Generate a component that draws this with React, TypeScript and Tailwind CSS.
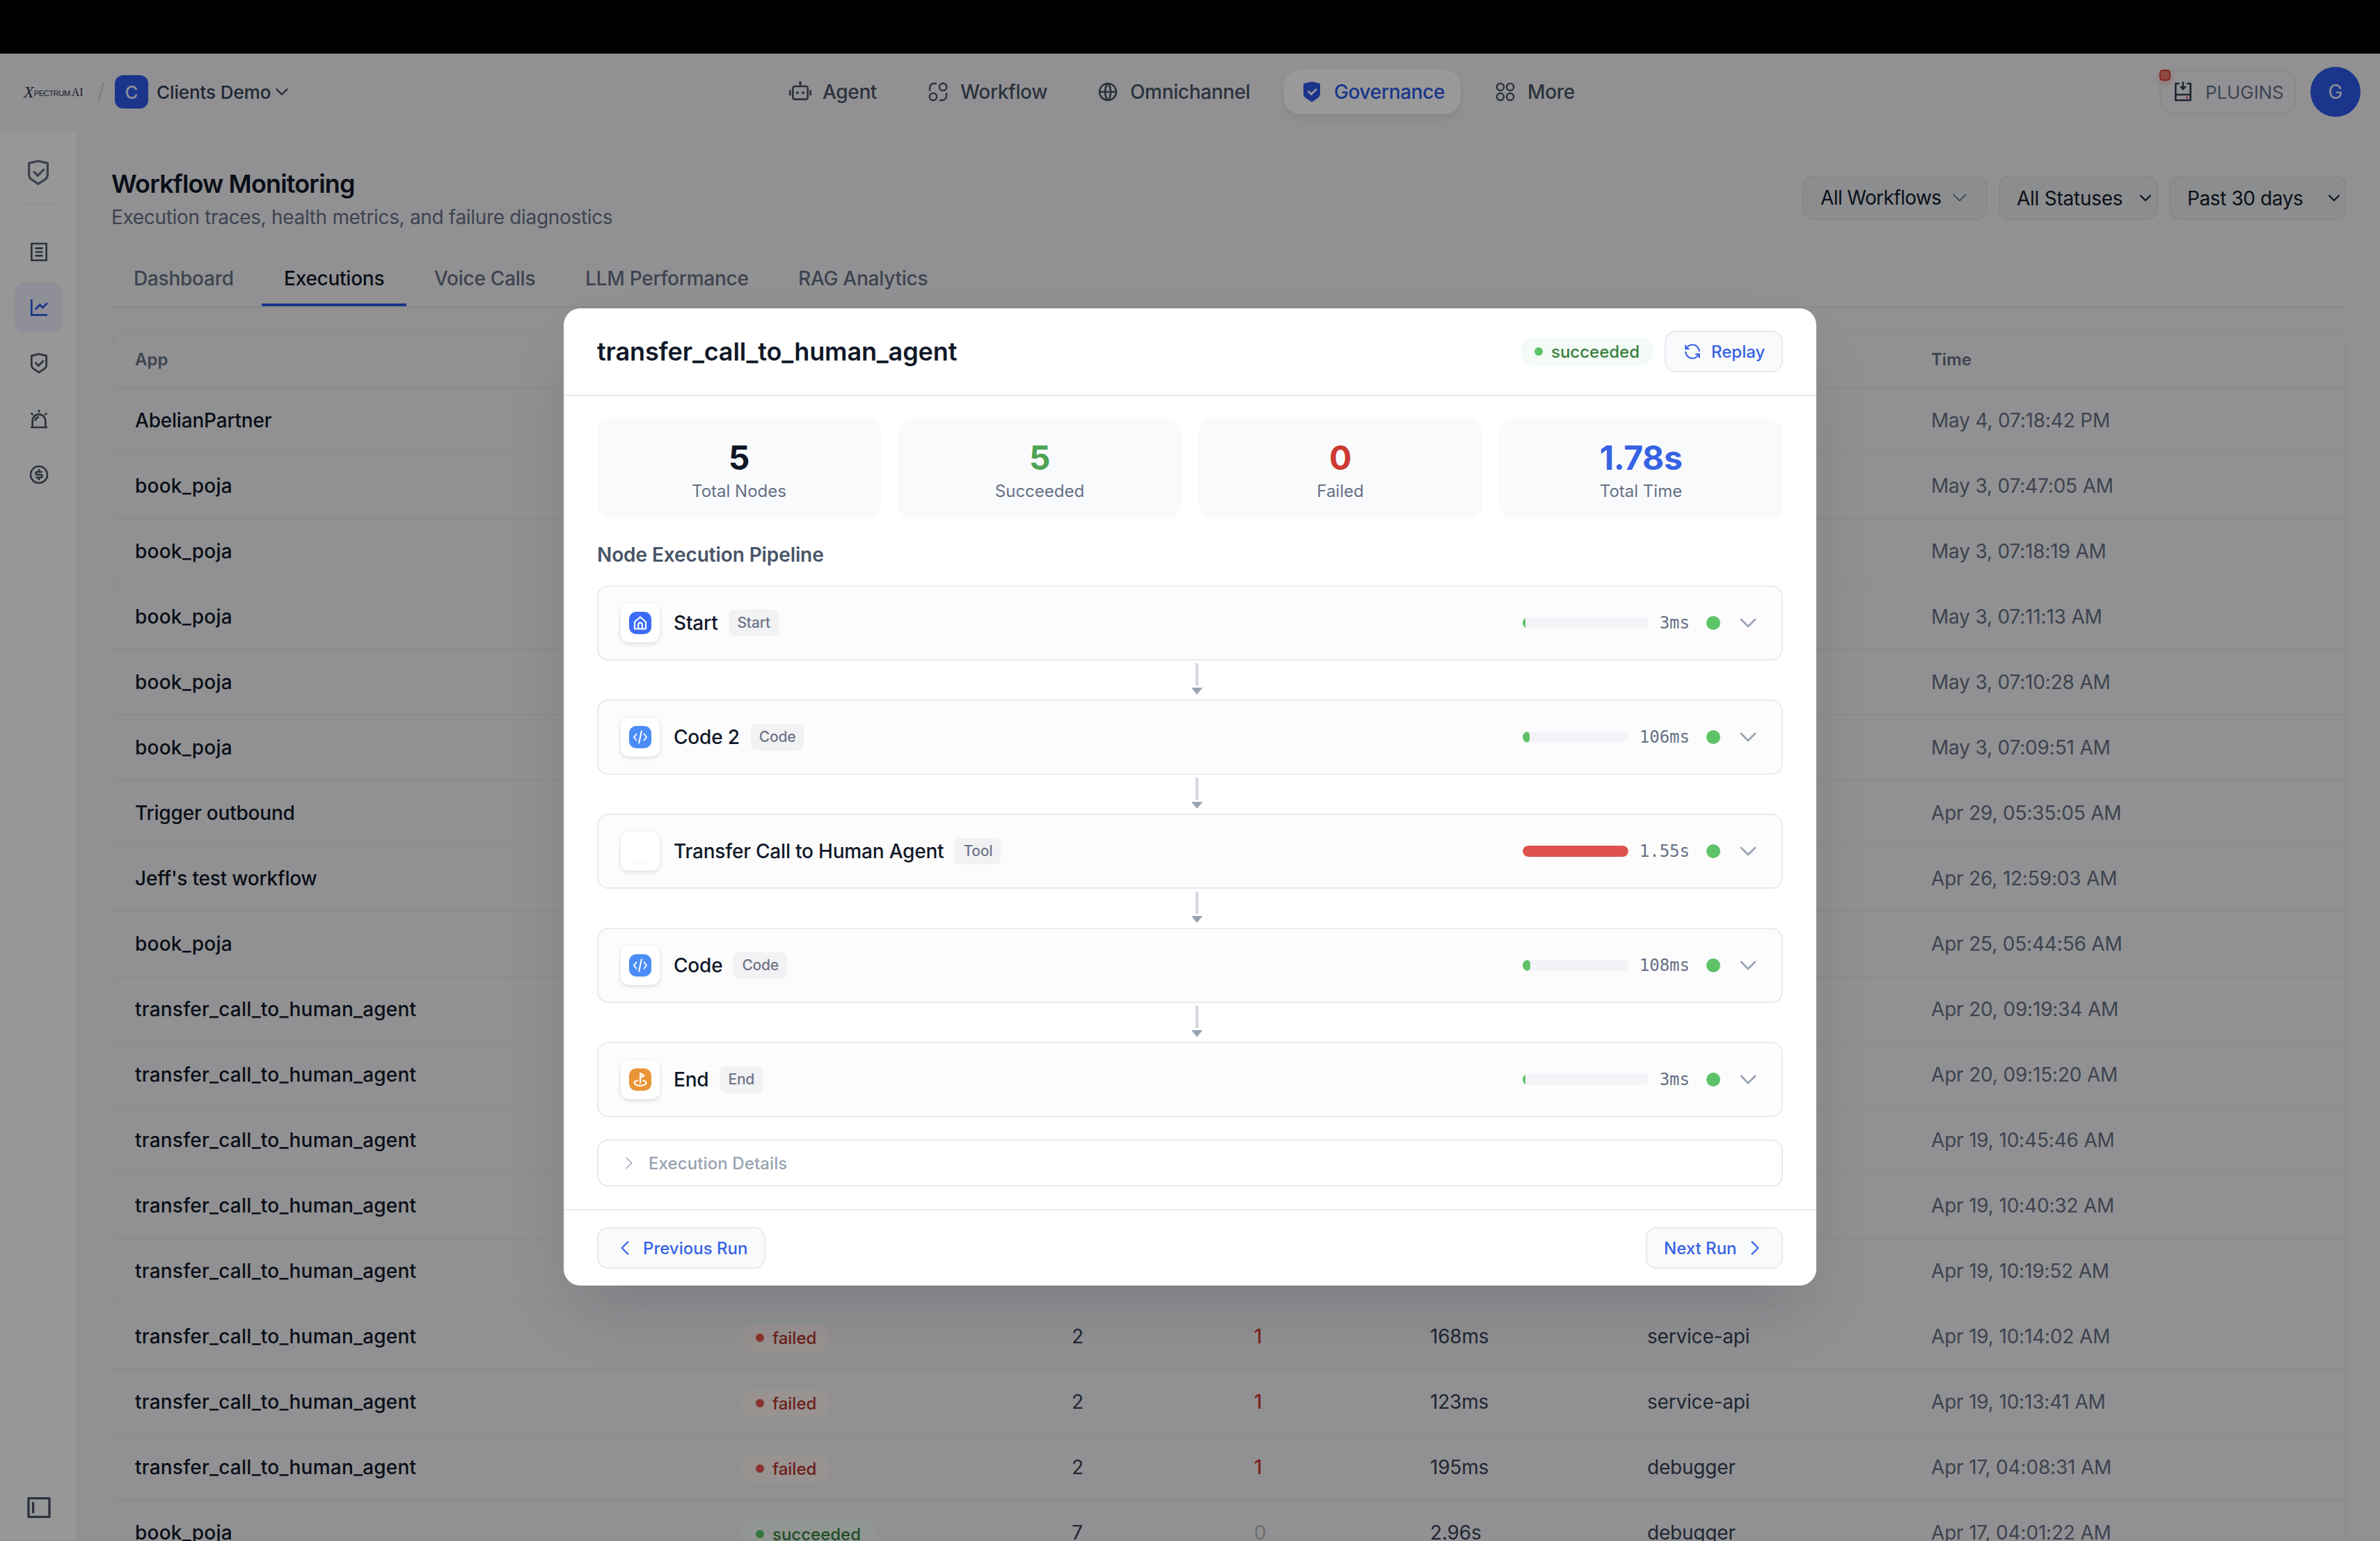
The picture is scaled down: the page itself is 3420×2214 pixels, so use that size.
import React from 'react';
import {
  RiAlarmWarningLine,
  RiFileListLine,
  RiGlobalLine,
  RiLayoutLeft2Line,
  RiLineChartLine,
  RiLoopLeftLine,
  RiMoneyDollarCircleLine,
  RiRobot2Line,
  RiShieldCheckFill,
  RiShieldCheckLine,
} from 'react-icons/ri';
import {
  HiOutlineChevronDown,
  HiOutlineChevronLeft,
  HiOutlineChevronRight,
} from 'react-icons/hi2';

type IconProps = { className?: string };

const WorkflowIcon: React.FC<IconProps> = ({ className }) => (
  <svg viewBox="0 0 24 24" fill="none" stroke="currentColor" strokeWidth="1.8" className={className}>
    <circle cx="17.3" cy="6.7" r="3.9" />
    <circle cx="6.7" cy="17.3" r="3.9" />
    <path d="M3 11V7.5A4.5 4.5 0 0 1 7.500 3H10.500" />
    <path d="M21 13V16.500A4.500 4.500 0 0 1 16.500 21H13.500" />
  </svg>
);

const MoreIcon: React.FC<IconProps> = ({ className }) => (
  <svg viewBox="0 0 24 24" fill="none" stroke="currentColor" strokeWidth="1.8" className={className}>
    <circle cx="6.7" cy="6.7" r="3.8" />
    <circle cx="17.3" cy="6.7" r="3.8" />
    <circle cx="6.7" cy="17.3" r="3.8" />
    <circle cx="17.3" cy="17.3" r="3.8" />
  </svg>
);

const PluginIcon: React.FC<IconProps> = ({ className }) => (
  <svg viewBox="0 0 24 24" className={className}>
    <path
      fill="currentColor"
      d="M8 2V4H5V14H19V4H16V2H20C20.550 2 21 2.450 21 3V21C21 21.550 20.550 22 20 22H4C3.450 22 3 21.550 3 21V3C3 2.450 3.450 2 4 2H8ZM19 16H5V20H19V16ZM13 1V6H16L12 10.500L8 6H11V1H13Z"
    />
    <rect x="15" y="17" width="2.4" height="2" fill="#e8554d" />
  </svg>
);

const HomeNodeIcon = () => (
  <svg viewBox="0 0 24 24" fill="none" stroke="white" strokeWidth="2.200" strokeLinejoin="round" className="size-6">
    <path d="M4 10.500L12 3.500L20 10.500V20.500H4Z" />
    <path d="M9.200 20V14.500A2.800 2.800 0 0 1 14.800 14.500V20" />
  </svg>
);

const CodeNodeIcon = () => (
  <svg viewBox="0 0 24 24" fill="none" stroke="white" strokeWidth="2" strokeLinecap="round" strokeLinejoin="round" className="size-6">
    <path d="M6.500 7.500L3 12L6.500 16.500" />
    <path d="M17.500 7.500L21 12L17.500 16.500" />
    <path d="M13.800 3.500L10.200 20.500" />
  </svg>
);

const EndNodeIcon = () => (
  <svg viewBox="0 0 24 24" fill="none" stroke="white" strokeWidth="2.200" strokeLinecap="round" strokeLinejoin="round" className="size-6">
    <path d="M12 17V3L17.500 6.300L12 9.500" />
    <path d="M8 13.500C5.200 14 3.500 15.200 3.500 16.800C3.500 19 7 20.800 12 20.800S20.500 19 20.500 16.800C20.500 15.200 18.800 14 16 13.500" />
  </svg>
);

const SelectChevron = () => (
  <svg viewBox="0 0 24 24" fill="none" stroke="currentColor" strokeWidth="2.100" className="size-6">
    <path d="M4.500 8.500L12 16L19.500 8.500" />
  </svg>
);

const navItems = [
  { label: 'Agent', icon: RiRobot2Line, width: 'w-[174px]' },
  { label: 'Workflow', icon: WorkflowIcon, width: 'w-[220px]' },
  { label: 'Omnichannel', icon: RiGlobalLine, width: 'w-[269px]' },
  { label: 'Governance', icon: RiShieldCheckFill, width: 'w-[254px]', active: true },
  { label: 'More', icon: MoreIcon, width: 'w-[163px]' },
];

const sideItems = [
  { icon: RiFileListLine },
  { icon: RiLineChartLine, active: true },
  { icon: RiShieldCheckLine },
  { icon: RiAlarmWarningLine },
  { icon: RiMoneyDollarCircleLine },
];

const tabs = [
  { label: 'Dashboard', width: 'w-[208px]' },
  { label: 'Executions', width: 'w-[208px]', active: true },
  { label: 'Voice Calls', width: 'w-[209px]' },
  { label: 'LLM Performance', width: 'w-[298px]' },
  { label: 'RAG Analytics', width: 'w-[250px]' },
];

type Execution = {
  app: string;
  time: string;
  status?: 'failed' | 'succeeded';
  nodes?: number;
  errors?: number;
  duration?: string;
  source?: string;
};

const executions: Execution[] = [
  { app: 'AbelianPartner', time: 'May 4, 07:18:42 PM' },
  { app: 'book_poja', time: 'May 3, 07:47:05 AM' },
  { app: 'book_poja', time: 'May 3, 07:18:19 AM' },
  { app: 'book_poja', time: 'May 3, 07:11:13 AM' },
  { app: 'book_poja', time: 'May 3, 07:10:28 AM' },
  { app: 'book_poja', time: 'May 3, 07:09:51 AM' },
  { app: 'Trigger outbound', time: 'Apr 29, 05:35:05 AM' },
  { app: "Jeff's test workflow", time: 'Apr 26, 12:59:03 AM' },
  { app: 'book_poja', time: 'Apr 25, 05:44:56 AM' },
  { app: 'transfer_call_to_human_agent', time: 'Apr 20, 09:19:34 AM' },
  { app: 'transfer_call_to_human_agent', time: 'Apr 20, 09:15:20 AM' },
  { app: 'transfer_call_to_human_agent', time: 'Apr 19, 10:45:46 AM' },
  { app: 'transfer_call_to_human_agent', time: 'Apr 19, 10:40:32 AM' },
  { app: 'transfer_call_to_human_agent', time: 'Apr 19, 10:19:52 AM' },
  { app: 'transfer_call_to_human_agent', time: 'Apr 19, 10:14:02 AM', status: 'failed', nodes: 2, errors: 1, duration: '168ms', source: 'service-api' },
  { app: 'transfer_call_to_human_agent', time: 'Apr 19, 10:13:41 AM', status: 'failed', nodes: 2, errors: 1, duration: '123ms', source: 'service-api' },
  { app: 'transfer_call_to_human_agent', time: 'Apr 17, 04:08:31 AM', status: 'failed', nodes: 2, errors: 1, duration: '195ms', source: 'debugger' },
  { app: 'book_poja', time: 'Apr 17, 04:01:22 AM', status: 'succeeded', nodes: 7, errors: 0, duration: '2.96s', source: 'debugger' },
];

const stats = [
  { label: 'Total Nodes', value: '5', color: 'text-[#101828]' },
  { label: 'Succeeded', value: '5', color: 'text-[#4ea454]' },
  { label: 'Failed', value: '0', color: 'text-[#cb3a33]' },
  { label: 'Total Time', value: '1.78s', color: 'text-[#3662e3]' },
];

const pipeline = [
  { name: 'Start', type: 'Start', time: '3ms', percent: 2, iconBg: 'bg-[#3c6cf7]', icon: HomeNodeIcon },
  { name: 'Code 2', type: 'Code', time: '106ms', percent: 6.8, iconBg: 'bg-[#4b8df6]', icon: CodeNodeIcon },
  { name: 'Transfer Call to Human Agent', type: 'Tool', time: '1.55s', percent: 100 },
  { name: 'Code', type: 'Code', time: '108ms', percent: 7, iconBg: 'bg-[#4b8df6]', icon: CodeNodeIcon },
  { name: 'End', type: 'End', time: '3ms', percent: 2, iconBg: 'bg-[#ea9537]', icon: EndNodeIcon },
];

const StatusPill: React.FC<{ status: 'failed' | 'succeeded' }> = ({ status }) => (
  <span
    className={`inline-flex h-10 items-center gap-3 rounded-full px-5 text-[24px] font-medium ${
      status === 'failed' ? 'bg-[#fdf3f2] text-[#b3362e]' : 'bg-[#f4faf6] text-[#38803f]'
    }`}
  >
    <span className={`size-3 rounded-full ${status === 'failed' ? 'bg-[#e8554d]' : 'bg-[#5ec269]'}`} />
    <span className="pt-0.5">{status}</span>
  </span>
);

const Header = () => (
  <header className="flex h-[111px] items-center pb-px">
    <div className="flex w-[1110px] items-center pl-[34px]">
      {/* Logo */}
      <div className="flex h-8 w-[86px] items-center whitespace-nowrap text-[#30344f]">
        <span className="font-['Liberation_Serif',serif] text-[24px] leading-none italic">X</span>
        <span className="font-['Liberation_Sans',sans-serif] pt-1.5 text-[11.5px] leading-none tracking-[-0.7px]">PECTRUM</span>
        <span className="font-['Liberation_Serif',serif] pt-0.5 pl-0.5 text-[16px] leading-none">AI</span>
      </div>
      <svg viewBox="0 0 10 30" className="ml-5 h-[30px] w-2.5" stroke="#cfd0d6" strokeWidth="2">
        <path d="M9 0L1 30" />
      </svg>
      <div className="ml-[15px] flex size-12 items-center justify-center rounded-xl bg-[#2c59e8] text-[26px] font-medium text-white/90">C</div>
      <span className="ml-3 text-[26px] font-medium tracking-[-0.1px] text-[#344054]">Clients Demo</span>
      <HiOutlineChevronDown className="ml-1 size-6 text-[#344054]" strokeWidth={2.2} />
    </div>

    <nav className="flex gap-6">
      {navItems.map((item) => (
        <div
          key={item.label}
          className={`flex h-16 items-center gap-4 rounded-3xl pl-6 text-[28px] font-medium tracking-[-0.35px] whitespace-nowrap ${item.width} ${
            item.active
              ? 'bg-white text-[#2c59e8] shadow-[0_8px_16px_-4px_rgba(16,24,40,0.1)]'
              : 'text-[#495464]'
          }`}
        >
          <item.icon className="size-8 shrink-0" />
          <span>{item.label}</span>
        </div>
      ))}
    </nav>

    <div className="ml-auto flex items-center gap-5 pr-7">
      <div className="relative flex h-16 w-[197px] items-center rounded-3xl border-2 border-[#e4e5e9] pl-4 text-[#344054]">
        <PluginIcon className="size-8" />
        <span className="ml-4 text-[26px] tracking-[-0.1px] text-[#667085]">PLUGINS</span>
        <span className="absolute -top-0.5 -left-0.5 size-4 rounded-[5px] border-2 border-[#dd3b30] bg-[#ef7a70] shadow-[0_4px_8px_rgba(240,68,56,0.35)]" />
      </div>
      <div className="flex size-[72px] items-center justify-center rounded-full bg-[#2c59e8] text-[28px] text-white/90">G</div>
    </div>
  </header>
);

const Sidebar = () => (
  <aside className="flex w-[110px] shrink-0 flex-col items-center bg-[#fcfcfc] pt-10 pb-7">
    <RiShieldCheckLine className="size-10 text-[#667085]" />
    <div className="mt-6 h-0.5 w-12 bg-[#eeeef0]" />
    <div className="mt-8 flex flex-col gap-2">
      {sideItems.map((item, index) => (
        <div
          key={index}
          className={`flex h-[72px] w-[70px] items-center rounded-2xl pl-5 ${
            item.active ? 'bg-[#eeeefe] text-[#2c59e8]' : 'text-[#495464]'
          }`}
        >
          <item.icon className="size-8" />
        </div>
      ))}
    </div>
    <RiLayoutLeft2Line className="mt-auto ml-0.5 size-10 text-[#495464]" />
  </aside>
);

const cols = 'grid grid-cols-[872px_474px_262px_253px_312px_408px_1fr] items-center pl-8';

// Underscored slugs are set a little wider than plain names
const nameTracking = (name: string) => (name.includes('_') ? 'tracking-[0.22px]' : 'tracking-[-0.2px]');

const ExecutionsTable = () => (
  <div className="mt-8 h-[1800px] rounded-3xl border-2 border-[#e9e9ec]">
    <div className={`${cols} h-[82px] border-b-2 border-[#e9e9ec] pt-0.5 text-[24px] font-semibold text-[#667085]`}>
      <span>App</span>
      <span className="col-start-7">Time</span>
    </div>
    {executions.map((row, index) => (
      <div key={index} className={`${cols} h-[94px] border-b-2 border-[#e9e9ec] text-[28px] text-[#344054]`}>
        <span className={`font-medium text-[#101828] ${nameTracking(row.app)}`}>{row.app}</span>
        <span className="flex pt-1">{row.status && <StatusPill status={row.status} />}</span>
        <span>{row.nodes}</span>
        <span className={row.errors ? 'font-medium text-[#cb3a33]' : 'text-[#b5b8bf]'}>{row.errors}</span>
        <span className="tracking-[-0.2px]">{row.duration}</span>
        <span className="tracking-[-0.2px]">{row.source}</span>
        <span className="tracking-[-0.18px] text-[#667085]">{row.time}</span>
      </div>
    ))}
  </div>
);

const MonitoringPage = () => (
  <main className="flex-1 overflow-hidden pr-12 pl-[50px]">
    <div className="flex items-start justify-between pt-14">
      <div>
        <h1 className="text-[36px] leading-[40px] font-semibold tracking-[-0.85px] text-[#101828]">Workflow Monitoring</h1>
        <p className="mt-2 text-[28px] leading-[40px] tracking-[-0.33px] text-[#667085]">
          Execution traces, health metrics, and failure diagnostics
        </p>
      </div>
      <div className="mt-2 flex gap-4 text-[28px] text-[#101828]">
        <div className="flex h-16 w-[266px] items-center justify-between rounded-2xl border-2 border-[#dfe1e4] bg-[#e9ecef] px-6">
          <span className="tracking-[-0.6px]">All Workflows</span>
          <HiOutlineChevronDown className="size-7 text-[#667085]" />
        </div>
        <div className="flex h-16 w-[229px] items-center justify-between rounded-2xl border-2 border-[#dfe1e4] bg-[#e9ecef] pr-1 pl-6">
          <span className="pt-0.5 tracking-[-0.25px]">All Statuses</span>
          <SelectChevron />
        </div>
        <div className="flex h-16 w-[255px] items-center justify-between rounded-2xl border-2 border-[#dfe1e4] bg-[#e9ecef] pr-1 pl-6">
          <span className="pt-0.5 tracking-[-0.4px]">Past 30 days</span>
          <SelectChevron />
        </div>
      </div>
    </div>

    <div className="mt-8 flex h-[78px] gap-2 border-b-2 border-[#e6e7ea] text-[28px] font-medium tracking-[-0.25px]">
      {tabs.map((tab) => (
        <div
          key={tab.label}
          className={`flex h-[76px] items-center border-b-4 pl-8 whitespace-nowrap ${tab.width} ${
            tab.active ? 'border-[#2c59e8] text-[#101828]' : 'border-transparent text-[#667085]'
          }`}
        >
          {tab.label}
        </div>
      ))}
    </div>

    <ExecutionsTable />
  </main>
);

const barColor = (percent: number) => (percent > 80 ? 'bg-[#dd524c]' : 'bg-[#5ec269]');

const RunDetailsModal = () => (
  <div className="w-[1800px] rounded-3xl bg-white shadow-[0_48px_96px_-24px_rgba(16,24,40,0.18)]">
    <div className="flex h-[126px] items-center justify-between border-b-2 border-[#e9eaf0] px-12">
      <h2 className="text-[36px] font-semibold tracking-[-0.12px] text-[#101828]">transfer_call_to_human_agent</h2>
      <div className="flex items-center gap-4">
        <StatusPill status="succeeded" />
        <button className="flex h-[60px] w-[170px] items-center gap-3 rounded-2xl border-2 border-[#e9eaf0] bg-[#f9fafc] pl-6 text-[24px] font-medium text-[#3662e3]">
          <RiLoopLeftLine className="size-7 p-px" />
          <span className="pt-0.5 pl-px">Replay</span>
        </button>
      </div>
    </div>

    <div className="px-12 py-8">
      <div className="grid grid-cols-4 gap-6">
        {stats.map((stat) => (
          <div key={stat.label} className="h-36 rounded-[20px] bg-[#f9fafc] pt-6 text-center">
            <p className={`text-[48px] leading-[66px] font-bold tracking-[-0.4px] ${stat.color}`}>{stat.value}</p>
            <p className="text-[24px] leading-[30px] text-[#667085]">{stat.label}</p>
          </div>
        ))}
      </div>

      <h3 className="mt-8 mb-6 text-[28px] leading-[40px] font-semibold tracking-[-0.1px] text-[#475467]">Node Execution Pipeline</h3>

      {pipeline.map((node, index) => (
        <React.Fragment key={index}>
          {index > 0 && (
            <div className="flex h-14 flex-col items-center pt-1 pl-5">
              <div className="h-8 w-1 bg-[#d3d7df]" />
              <div className="mt-[3px] border-x-8 border-t-10 border-x-transparent border-t-[#98a2b3]" />
            </div>
          )}
          <div className="flex h-[108px] items-center rounded-2xl border-2 border-[#e9eaf0] bg-[#fcfcfd] px-8">
            <div className="flex size-14 items-center justify-center rounded-xl bg-white shadow-[0_2px_6px_rgba(16,24,40,0.14)]">
              <div className={`flex size-8 items-center justify-center rounded-[10px] shadow-[0_1px_3px_rgba(16,24,40,0.05)] ${node.iconBg ?? 'bg-white'}`}>
                {node.icon && <node.icon />}
              </div>
            </div>
            <span className="ml-5 text-[28px] font-medium tracking-[-0.2px] text-[#101828]">{node.name}</span>
            <span className="ml-4 rounded-lg bg-[#f2f2f4] px-3 py-1 text-[21px] leading-[30px] font-medium tracking-[-0.2px] text-[#6d7488]">{node.type}</span>

            <div className="ml-auto flex w-60 items-center gap-4">
              <div className="h-4 flex-1 overflow-hidden rounded-full bg-[#f2f4f8]">
                <div className={`h-full rounded-full ${barColor(node.percent)}`} style={{ width: `${node.percent}%` }} />
              </div>
              <span className="font-['DejaVu_Sans_Mono',monospace] text-[24px] leading-none text-[#667085]">{node.time}</span>
            </div>
            <span className="ml-6 size-5 rounded-full bg-[#5ec269]" />
            <HiOutlineChevronDown className="ml-6 size-8 text-[#98a2b3]" strokeWidth={2} />
          </div>
        </React.Fragment>
      ))}

      <div className="mt-8 flex h-[68px] items-center gap-4 rounded-2xl border-2 border-[#e9eaf0] px-8 text-[24px] font-medium text-[#98a2b3]">
        <HiOutlineChevronRight className="size-6" />
        <span className="pt-0.5 tracking-[0.1px]">Execution Details</span>
      </div>
    </div>

    <div className="flex h-[110px] items-center justify-between border-t-2 border-[#e9eaf0] px-12 text-[24px] font-medium text-[#3662e3]">
      <button className="flex h-[60px] w-[242px] items-center gap-3 rounded-2xl border-2 border-[#e9eaf0] bg-[#f9fafc] pl-6 whitespace-nowrap">
        <HiOutlineChevronLeft className="size-7" strokeWidth={2} />
        <span className="pt-0.5">Previous Run</span>
      </button>
      <button className="flex h-[60px] w-[197px] items-center justify-between rounded-2xl border-2 border-[#e9eaf0] bg-[#f9fafc] px-6 whitespace-nowrap">
        <span className="pt-0.5">Next Run</span>
        <HiOutlineChevronRight className="size-7" strokeWidth={2} />
      </button>
    </div>
  </div>
);

const App: React.FC = () => {
  return (
    <div className="relative flex h-[2214px] w-[3420px] flex-col overflow-hidden bg-[#f2f2f5] font-['Inter',sans-serif]">
      <div className="h-[77px] shrink-0 bg-black" />
      <Header />
      <div className="flex min-h-0 flex-1">
        <Sidebar />
        <MonitoringPage />
      </div>

      {/* Backdrop with the run details on top */}
      <div className="absolute inset-x-0 top-[76px] bottom-0 flex items-center justify-center bg-black/40">
        <RunDetailsModal />
      </div>
    </div>
  );
};

export default App;
